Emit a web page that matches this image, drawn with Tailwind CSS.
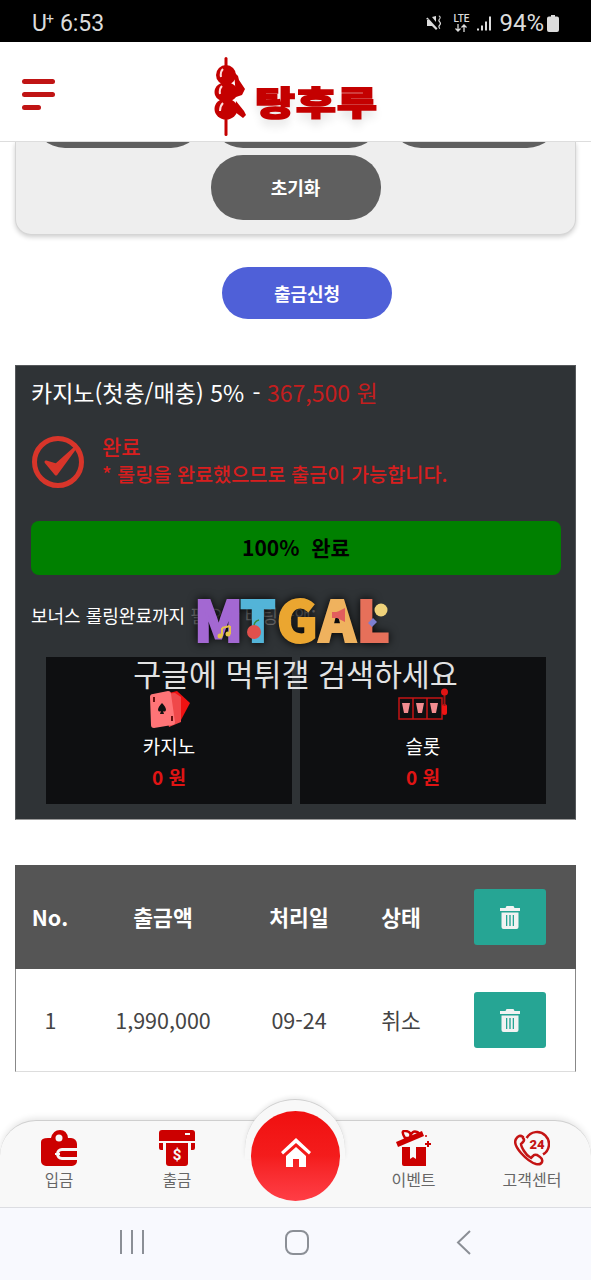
<!DOCTYPE html>
<html lang="ko">
<head>
    <meta charset="UTF-8">
    <meta name="viewport" content="width=device-width, initial-scale=1.0">
    <title>탕후루</title>
    <script src="https://cdn.jsdelivr.net/npm/@tailwindcss/browser@4"></script>
</head>
<body class="bg-white font-['Noto_Sans_CJK_KR','Noto_Sans',sans-serif]">
<div class="relative w-[591px] h-[1280px] overflow-hidden bg-white">

    <!-- status bar -->
    <div class="relative z-20 h-[42px] bg-black text-[#dcdcdc] flex items-center justify-between pl-[32px] pr-[32px] pt-[4px] font-['Roboto',sans-serif]">
        <div class="text-[23px] leading-none flex items-start">U<sup class="text-[14px] leading-none -ml-px mr-[5px] top-0">+</sup><span class="ml-px">6:53</span></div>
        <div class="flex items-center">
            <svg class="w-[18px] h-[18px]" viewBox="0 0 18 18" fill="#dcdcdc"><path d="M1 5l1.500-1.500 10 11L11 16 7 12H2V6h2zM7 3l4-1v6zM13.500 2c1.500 1 1.500 2 .5 3s-1 2 0 3 1 2 0 3-1 2 .5 4l.8-.6c-1-1.300-1-2-.2-2.900 1.300-1.300 1.300-2.600 0-4-.8-.9-.8-1.500 0-2.400.9-1 1-2.700-.8-3.700z"/></svg>
            <div class="ml-[9px] w-[18px] flex flex-col items-center text-[10px] leading-[10px] font-medium">LTE<svg class="w-[16px] h-[8px]" viewBox="0 0 16 8" fill="none" stroke="#dcdcdc" stroke-width="1.300"><path d="M5 0v7M2.500 4.500L5 7l2.500-2.500M11 8V1M8.500 3.500L11 1l2.500 2.500"/></svg></div>
            <svg class="ml-[6px] w-[16px] h-[17px]" viewBox="0 0 16 16" fill="#dcdcdc"><rect x="1" y="13" width="2" height="2"/><rect x="5" y="10" width="2" height="5"/><rect x="9" y="6" width="2" height="9"/><rect x="13" y="1" width="2" height="14"/></svg>
            <span class="ml-[7px] text-[24px] leading-none">94%</span>
            <svg class="ml-[3px] w-[12px] h-[17px]" viewBox="0 0 12 17" fill="#dcdcdc"><path d="M4 0h4v1.500h2a2 2 0 0 1 2 2V15a2 2 0 0 1-2 2H2a2 2 0 0 1-2-2V3.500a2 2 0 0 1 2-2h2z"/></svg>
        </div>
    </div>

    <!-- header -->
    <header class="relative z-10 h-[100px] bg-white border-b border-[#dddddd] flex items-center">
        <div class="ml-[22px] flex flex-col gap-[8px] mt-[5px]">
            <span class="block w-[33px] h-[5px] rounded-full bg-[#c01414]"></span>
            <span class="block w-[33px] h-[5px] rounded-full bg-[#c01414]"></span>
            <span class="block w-[19px] h-[5px] rounded-full bg-[#c01414]"></span>
        </div>
        <div class="absolute left-[214px] top-[15px] flex items-center">
            <svg class="w-[36px] h-[80px]" viewBox="0 0 36 80" fill="#c40000">
                <rect x="10.500" y="0" width="3" height="79" rx="1.500"/>
                <ellipse cx="12" cy="18" rx="10" ry="10"/>
                <ellipse cx="12" cy="35" rx="11.500" ry="10"/>
                <ellipse cx="12" cy="52" rx="11.500" ry="10.500"/>
                <path d="M20 15l4 4 1 4 6 9-3 6-6 2zM22 44l8 10 2 4-3 3-8-6z"/>
                <path d="M9 12q-3 3-2 8M8 29q-3 3-2 8M9 46q-3 3-3 8" stroke="#ffdcdc" stroke-width="2" fill="none"/>
            </svg>
            <span class="ml-[5px] mt-[8px] origin-left scale-x-[1.14] scale-y-[0.87] text-[38px] leading-none font-black text-[#c40000] tracking-[1px] [-webkit-text-stroke:2px_#c40000] [text-shadow:0_8px_10px_rgba(0,0,0,0.12)]">탕후루</span>
        </div>
    </header>

    <!-- search card, scrolled under the header -->
    <section class="flex flex-col mx-[15px] h-[93px] bg-[#eeeeee] border border-t-0 border-[#d5d5d5] rounded-b-[16px] shadow-[0_2px_5px_rgba(0,0,0,0.2)]">
        <div class="flex justify-center gap-[8px] -mt-[59px]">
            <div class="w-[170px] h-[65px] shrink-0 rounded-[32px] bg-[#5f5f5f]"></div>
            <div class="w-[170px] h-[65px] shrink-0 rounded-[32px] bg-[#5f5f5f]"></div>
            <div class="w-[170px] h-[65px] shrink-0 rounded-[32px] bg-[#5f5f5f]"></div>
        </div>
        <div class="flex justify-center mt-[7px]">
            <button class="w-[170px] h-[65px] shrink-0 rounded-[32px] bg-[#5f5f5f] text-white text-[18px] font-bold">초기화</button>
        </div>
    </section>

    <div class="flex justify-center mt-[32px] pl-[23px]">
        <button class="w-[170px] h-[52px] rounded-full bg-[#4f60d8] text-white text-[18px] font-bold">출금신청</button>
    </div>

    <!-- bonus panel -->
    <section class="mt-[46px] mx-[15px] h-[455px] bg-[#2f3336] border border-[#55585b] border-b-[#999999] pl-[15px] pr-[14px]">
        <div class="pt-[8px] h-[56px] text-[23px] leading-[36px] text-white whitespace-nowrap">카지노(첫충/매충) 5% <span class="ml-[2px]">-</span> <span class="text-[#c41e1e]">367,500 원</span></div>
        <div class="flex items-center h-[60px] mt-[10px]">
            <svg class="w-[54px] h-[54px]" viewBox="0 0 54 54" fill="none"><circle cx="27" cy="27" r="23.500" stroke="#d8352a" stroke-width="5"/><path d="M15 27l10 12L44 13 25 30z" fill="#d8352a" stroke="#d8352a" stroke-width="3" stroke-linejoin="round"/></svg>
            <div class="ml-[17px] -mt-[4px] text-[#d81e1e] font-medium whitespace-nowrap">
                <div class="text-[21px] leading-[27px]">완료</div>
                <div class="text-[19.700px] leading-[27px]">* 롤링을 완료했으므로 출금이 가능합니다.</div>
            </div>
        </div>
        <div class="mt-[29px] h-[54px] rounded-[8px] bg-[#008000] flex items-center justify-center text-[21px] font-bold text-black">100% &nbsp;완료</div>
        <div class="mt-[27px] h-[26px] text-[18px] leading-[26px] text-white whitespace-nowrap">보너스 롤링완료까지 <span class="text-[#6f6f6f]">필요한 배팅금액:</span></div>
        <div class="mt-[29px] mx-[15px] grid grid-cols-2 gap-[8px]">
            <div class="h-[147px] bg-[#0e0f11] flex flex-col items-center">
                <svg class="mt-[33px] w-[44px] h-[38px]" viewBox="0 0 44 38"><path d="M22 3l8-2 13 12-9 17-12-8z" fill="#f01212"/><path d="M14 4l14-1 6 4v25l-12 5z" fill="#f0484a"/><path d="M4 6Q4 3 7 3l15-3q3 0 3 3l4 28q0 3-3 3l-18 3q-3 0-3-3z" transform="translate(-1 1)" fill="#ff7477"/><path d="M15 13q4 4 4 7a2 2 0 0 1-3 1l1 3h-4l1-3a2 2 0 0 1-3-1q0-3 4-7z" fill="#111"/><rect x="6" y="7" width="2" height="5" fill="#611"/><rect x="24" y="26" width="2" height="5" fill="#611"/></svg>
                <div class="mt-[5px] text-[19px] leading-[26px] text-white">카지노</div>
                <div class="mt-[4px] text-[19px] leading-[28px] font-bold text-[#e01414]">0 원</div>
            </div>
            <div class="h-[147px] bg-[#0e0f11] flex flex-col items-center">
                <svg class="mt-[31px] w-[50px] h-[33px]" viewBox="0 0 50 33" fill="none"><rect x="1" y="10" width="43" height="21" stroke="#c41414" stroke-width="1.500"/><path d="M15 10v21M29 10v21" stroke="#c41414" stroke-width="1.500"/><path d="M4 15h8l-2 10H6zM18 15h8l-2 10h-4zM32 15h8l-2 10h-4z" fill="#f38d90"/><rect x="44" y="16" width="5" height="11" rx="2.500" fill="#f01414"/><path d="M46.500 6v12" stroke="#a01414" stroke-width="2"/><circle cx="46.500" cy="4" r="3.500" fill="#e01414"/></svg>
                <div class="mt-[12px] text-[19px] leading-[26px] text-white">슬롯</div>
                <div class="mt-[4px] text-[19px] leading-[28px] font-bold text-[#e01414]">0 원</div>
            </div>
        </div>
    </section>

    <!-- history table -->
    <section class="mt-[45px] mx-[15px]">
        <div class="grid grid-cols-[70px_156px_116px_88px_130px] items-center h-[104px] bg-[#555555] text-white text-[21.500px] font-bold text-center">
            <div>No.</div>
            <div>출금액</div>
            <div>처리일</div>
            <div>상태</div>
            <div class="flex justify-center"><button class="w-[72px] h-[56px] rounded-[3px] bg-[#26a594] flex items-center justify-center"><svg class="w-[20px] h-[23px]" viewBox="0 0 20 23" fill="#f2f2f2"><path d="M6.500 0h7l1 2H20v3H0V2h5.500zM1.500 6.500h17V21a2 2 0 0 1-2 2h-13a2 2 0 0 1-2-2zM6 9v11h1.300V9zm3.300 0v11h1.400V9zm3.400 0v11H14V9z" fill-rule="evenodd"/></svg></button></div>
        </div>
        <div class="grid grid-cols-[69px_156px_116px_88px_129px] items-center h-[103px] bg-white border-x border-x-[#888888] border-b border-b-[#dddddd] text-[#444444] text-[21.500px] text-center font-normal">
            <div>1</div>
            <div>1,990,000</div>
            <div>09-24</div>
            <div>취소</div>
            <div class="flex justify-center"><button class="w-[72px] h-[56px] rounded-[3px] bg-[#26a594] flex items-center justify-center"><svg class="w-[20px] h-[23px]" viewBox="0 0 20 23" fill="#f2f2f2"><path d="M6.500 0h7l1 2H20v3H0V2h5.500zM1.500 6.500h17V21a2 2 0 0 1-2 2h-13a2 2 0 0 1-2-2zM6 9v11h1.300V9zm3.300 0v11h1.400V9zm3.400 0v11H14V9z" fill-rule="evenodd"/></svg></button></div>
        </div>
    </section>

    <!-- watermark over the panel -->
    <div class="absolute left-[194px] top-[591px] w-[196px] h-[54px] flex justify-between items-center text-[56px] leading-none font-black [filter:drop-shadow(0_0_5px_rgba(0,0,0,0.95))]">
        <span class="text-[#a368d2] [-webkit-text-stroke:2px_#a368d2]">M</span>
        <span class="text-[#53b4d8] -ml-[4px] [-webkit-text-stroke:2px_#53b4d8]">T</span>
        <span class="text-[#eba630] [-webkit-text-stroke:2px_#eba630]">G</span>
        <span class="text-[#efb25e] [-webkit-text-stroke:2px_#efb25e]">A</span>
        <span class="text-[#e6705a] [-webkit-text-stroke:2px_#e6705a]">L</span>
    </div>
    <svg class="absolute left-[194px] top-[598px] w-[196px] h-[48px]" viewBox="0 0 196 48">
        <circle cx="60" cy="34" r="7" fill="#e0504c"/><path d="M60 27q1-4 5-5" stroke="#3a8a3a" stroke-width="1.500" fill="none"/>
        <path d="M28 30v8M36 28v8M28 30l8-2" stroke="#e6c24a" stroke-width="2" fill="none"/><circle cx="26" cy="38" r="2.500" fill="#e6c24a"/><circle cx="34" cy="36" r="2.500" fill="#e6c24a"/>
        <path d="M143 14l8-4v14l-8-4h-5v-6z" fill="#e25d5d"/>
        <circle cx="187" cy="12" r="6.500" fill="#efd27a"/><path d="M179 20l4 4-5 5-4-4z" fill="#7d7fd0"/>
    </svg>
    <div class="absolute left-0 right-0 top-[652px] text-center text-[30.400px] leading-[42px] text-[#e2e2e2]">구글에 먹튀갤 검색하세요</div>

    <!-- bottom tab bar -->
    <nav class="absolute left-0 right-0 bottom-[73px] h-[87px] bg-[#f8f8f8] border-t border-[#cfcfcf] rounded-t-[36px] shadow-[0_-2px_6px_rgba(0,0,0,0.1)]">
        <div class="absolute left-[245px] -top-[22px] w-[100px] h-[60px] rounded-t-full bg-[#f8f8f8] border-t border-[#cfcfcf] shadow-[0_-2px_4px_rgba(0,0,0,0.08)]"></div>
        <div class="absolute left-[251px] -top-[10px] w-[89px] h-[90px] rounded-full bg-gradient-to-b from-[#f00f0f] via-[#f41c1c] to-[#ff3d45] flex items-center justify-center">
            <svg class="w-[30px] h-[30px] -mt-[8px]" viewBox="0 0 30 30" fill="#ffffff"><path d="M15 1L0 15l2 2.500L15 6l13 11.500 2-2.500zM5 19l10-9 10 9v11h-7v-8h-6v8H5z"/></svg>
        </div>
        <div class="relative grid grid-cols-[118px_118px_118px_119px_118px] h-full">
            <div class="flex flex-col items-center pt-[9px]">
                <svg class="w-[36px] h-[36px]" viewBox="0 0 36 36" fill="#cc0000"><path d="M7 8q2 0 3 0 2-8 9-8t8 8h3a6 6 0 0 1 6 6v4H21a6 6 0 0 0 0 12h15v1a5 5 0 0 1-5 5H5a5 5 0 0 1-5-5V12q0-4 7-4z"/><path d="M21 21h15v6H21a3 3 0 0 1 0-6z"/><circle cx="18" cy="8" r="3.500" fill="#f8f8f8"/><rect x="14" y="23" width="5" height="2" fill="#f8f8f8"/></svg>
                <span class="mt-[2px] text-[15.500px] leading-[22px] text-[#666666]">입금</span>
            </div>
            <div class="flex flex-col items-center pt-[9px]">
                <svg class="w-[36px] h-[36px]" viewBox="0 0 36 36" fill="#cc0000"><path d="M3 0h30a3 3 0 0 1 3 3v8H0V3a3 3 0 0 1 3-3z"/><rect x="26" y="3" width="5" height="2" fill="#f8f8f8"/><path d="M0 13h4v7H2a2 2 0 0 1-2-2zM32 13h4v5a2 2 0 0 1-2 2h-2z"/><path d="M7 13h22v20a3 3 0 0 1-3 3H10a3 3 0 0 1-3-3z"/><text x="18" y="30" text-anchor="middle" font-size="15" font-weight="700" fill="#f8f8f8" font-family="Roboto, sans-serif">$</text></svg>
                <span class="mt-[2px] text-[15.500px] leading-[22px] text-[#666666]">출금</span>
            </div>
            <div></div>
            <div class="flex flex-col items-center pt-[9px]">
                <svg class="w-[36px] h-[36px]" viewBox="0 0 36 36" fill="#cc0000"><path d="M6 17h24v19H8a2 2 0 0 1-2-2z"/><path d="M14 17h6v12l-3-2-3 2z" fill="#f8f8f8"/><path d="M0 12L26 1l2 5L2 17z"/><path d="M9 8Q4 0 10 1t4 6q2-7 7-5t-6 6z" fill="none" stroke="#cc0000" stroke-width="2.500"/><path d="M32 11v6M29 14h6" stroke="#cc0000" stroke-width="2"/><circle cx="30" cy="6" r="1"/></svg>
                <span class="mt-[2px] text-[16px] leading-[22px] text-[#666666]">이벤트</span>
            </div>
            <div class="flex flex-col items-center pt-[9px]">
                <svg class="w-[36px] h-[36px]" viewBox="0 0 36 36" fill="none" stroke="#c41414"><path d="M9 7q-4-3-7 2-3 5 5 14t15 11q5 1 6-2 1-3-2-5l-3-2q-3-1-4 1l-2 2q-4-2-7-7t-3-7l2-2q2-2 0-4z" stroke-width="2.500"/><path d="M12.600 8A12 12 0 1 1 29 24.400" stroke-width="2.500"/><text x="23" y="19" text-anchor="middle" font-size="13" font-weight="900" fill="#c41414" stroke="none" font-family="Roboto, sans-serif">24</text></svg>
                <span class="mt-[2px] text-[16px] leading-[22px] text-[#666666] whitespace-nowrap">고객센터</span>
            </div>
        </div>
    </nav>

    <!-- android nav -->
    <div class="absolute left-0 right-0 bottom-0 h-[73px] bg-[#f8f9fe] border-t border-[#dcdde2] flex items-center">
        <svg class="absolute left-[120px] top-[22px] w-[24px] h-[24px]" viewBox="0 0 24 24" stroke="#8b8f96" stroke-width="2"><path d="M1 0v24M12 0v24M23 0v24"/></svg>
        <div class="absolute left-[285px] top-[22px] w-[24px] h-[25px] rounded-[8px] border-2 border-[#8b8f96]"></div>
        <svg class="absolute left-[456px] top-[22px] w-[15px] h-[25px]" viewBox="0 0 15 25" fill="none" stroke="#8b8f96" stroke-width="2"><path d="M14 1L2 12.500 14 24"/></svg>
    </div>
</div>
</body>
</html>
